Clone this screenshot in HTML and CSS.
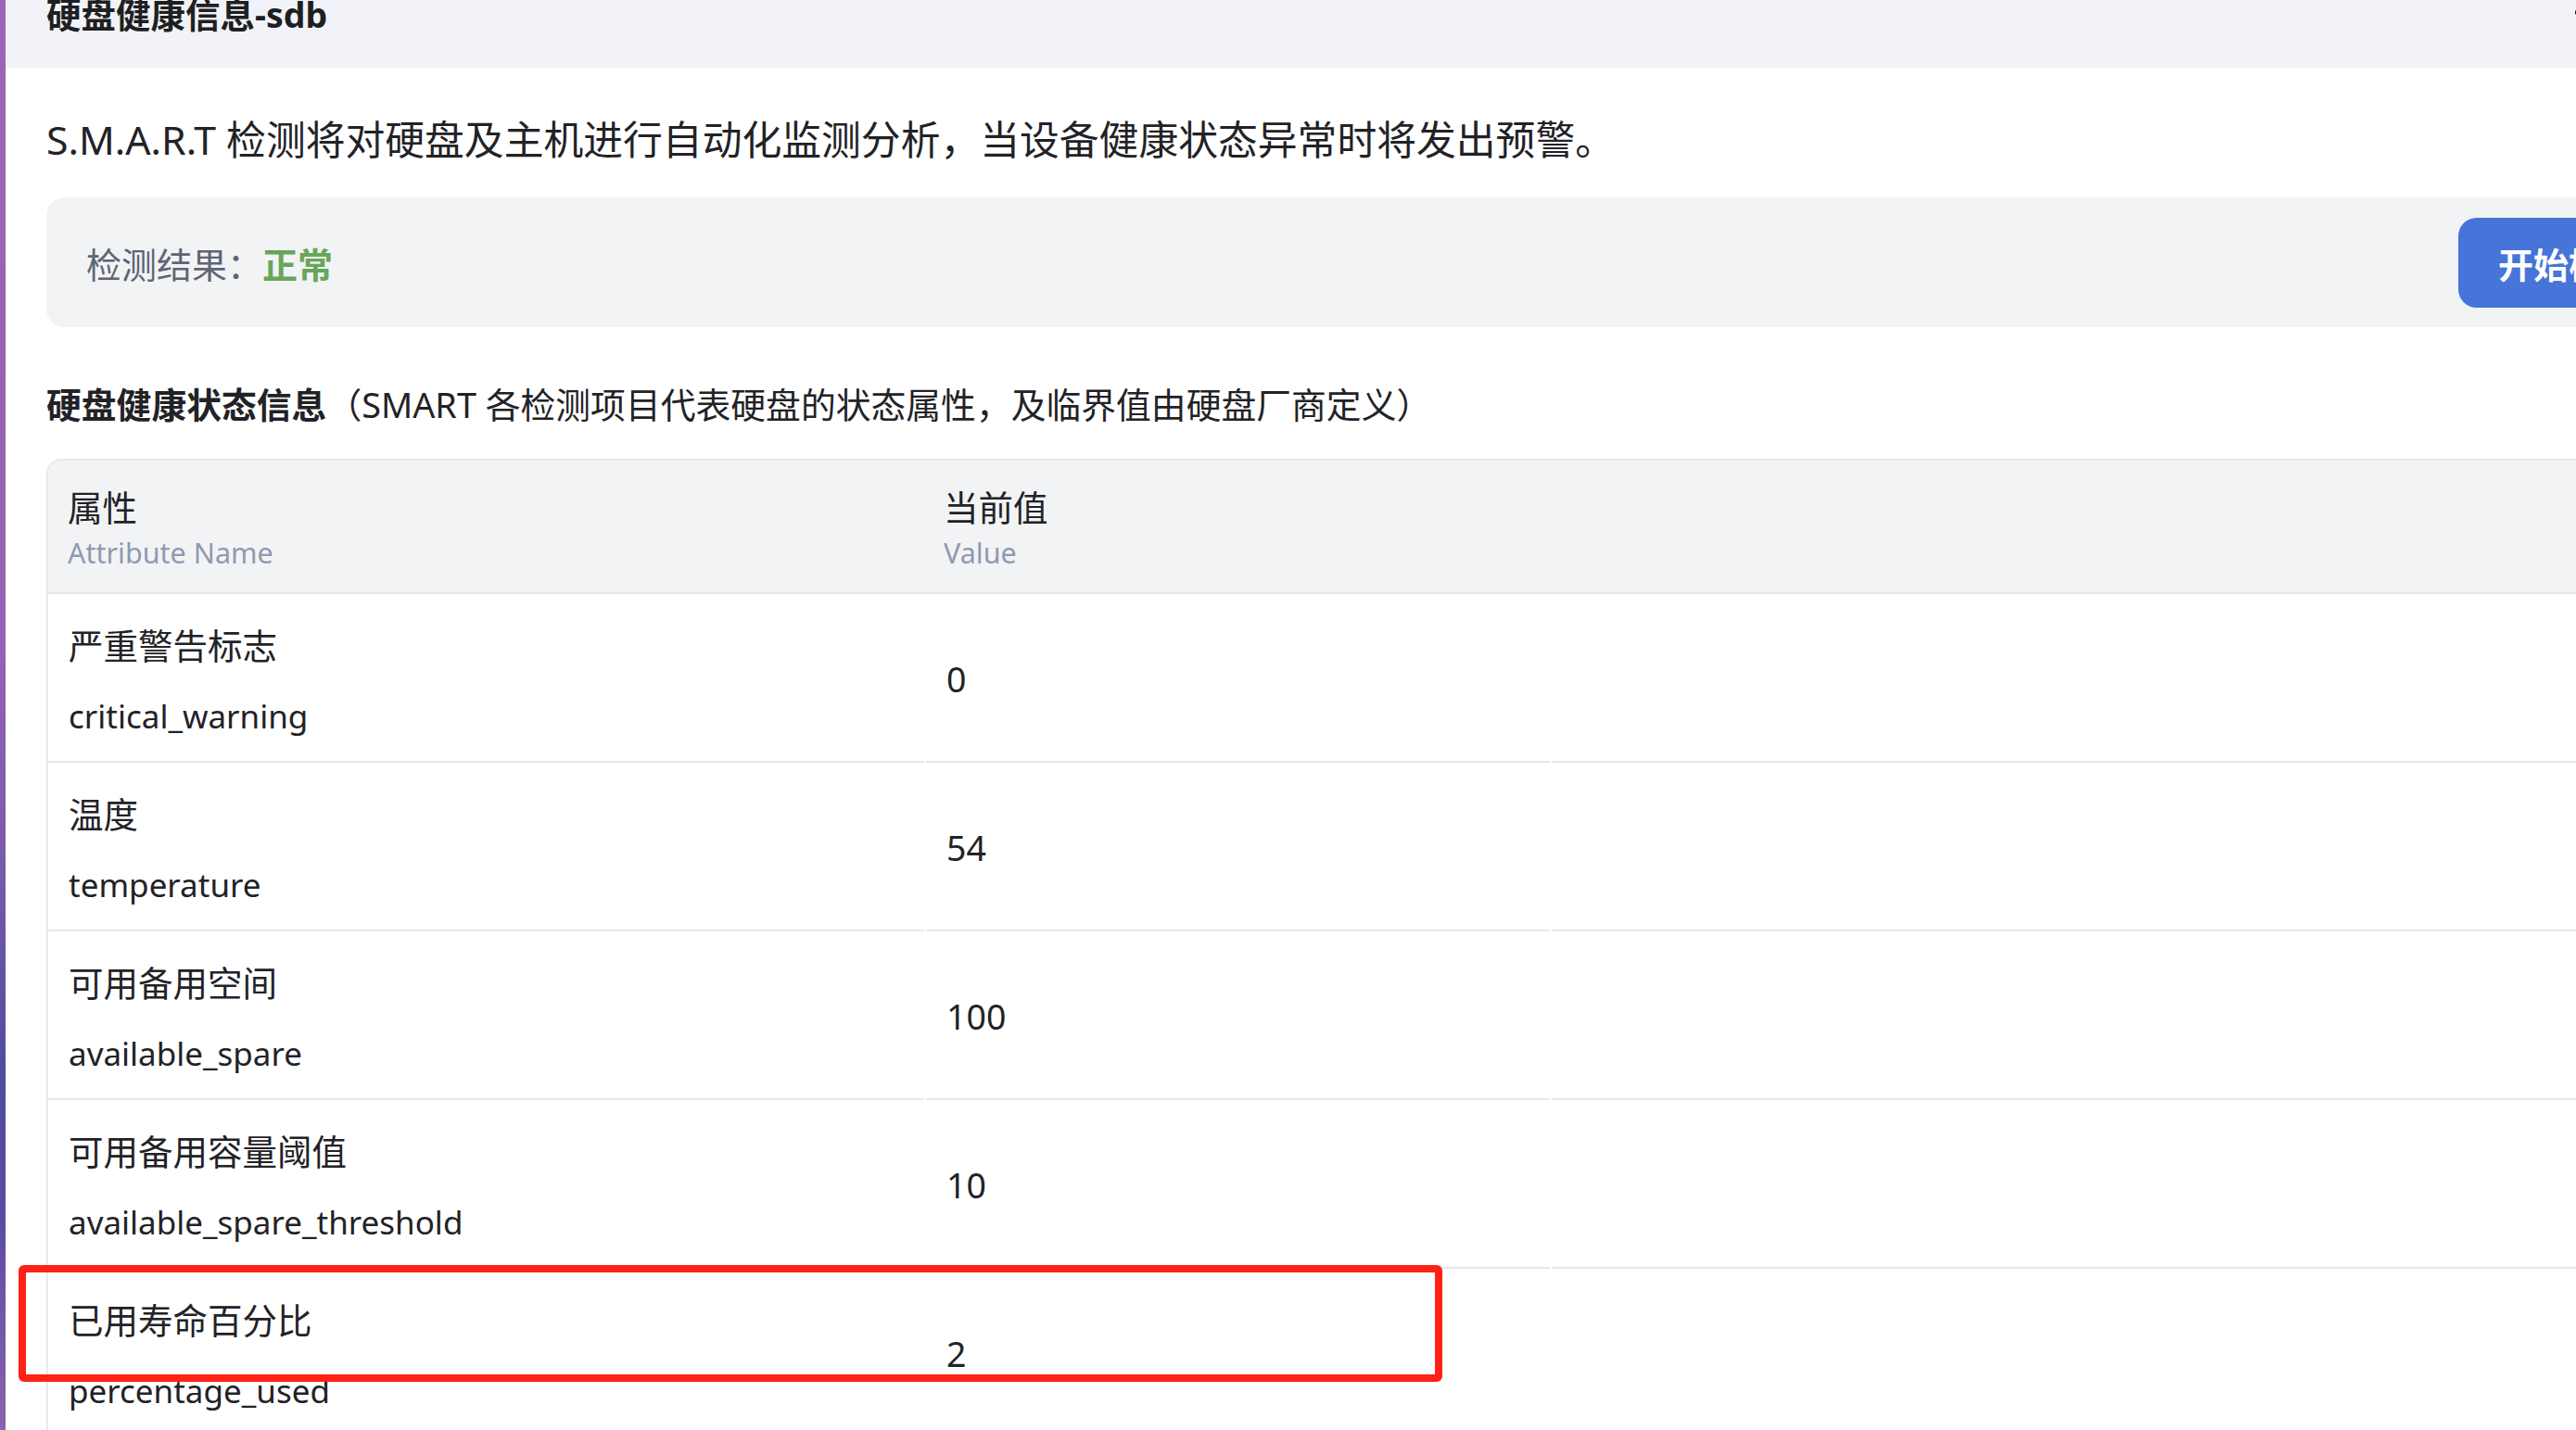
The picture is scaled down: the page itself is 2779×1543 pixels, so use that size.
FILE: index.html
```html
<!DOCTYPE html>
<html lang="zh-CN">
<head>
<meta charset="utf-8">
<title>硬盘健康信息-sdb</title>
<link rel="stylesheet" href="styles.css">
</head>
<body>
<div class="desk"></div>
<div class="dialog">
  <div class="dlg-head">
    <div class="title">硬盘健康信息-sdb</div>
    <svg class="close" width="30" height="30" viewBox="0 0 30 30"><line x1="1" y1="13.5" x2="22" y2="13.5" stroke="#222" stroke-width="4"/></svg>
  </div>
  <div class="dlg-body">
    <div class="desc">S.M.A.R.T 检测将对硬盘及主机进行自动化监测分析，当设备健康状态异常时将发出预警。</div>
    <div class="result">
      <div class="result-text">检测结果：<span class="ok">正常</span></div>
      <button class="btn">开始检测</button>
    </div>
    <div class="section">
      <span class="section-strong">硬盘健康状态信息</span><span class="section-note">（SMART 各检测项目代表硬盘的状态属性，及临界值由硬盘厂商定义）</span>
    </div>
    <div class="table">
      <div class="thead">
        <div class="th">
          <div class="th-cn">属性</div>
          <div class="th-en">Attribute Name</div>
        </div>
        <div class="th">
          <div class="th-cn">当前值</div>
          <div class="th-en">Value</div>
        </div>
        <div class="th"></div>
      </div>
      <div class="tr">
        <div class="td name"><div class="n-cn">严重警告标志</div><div class="n-en">critical_warning</div></div>
        <div class="td val">0</div>
        <div class="td"></div>
      </div>
      <div class="tr">
        <div class="td name"><div class="n-cn">温度</div><div class="n-en">temperature</div></div>
        <div class="td val">54</div>
        <div class="td"></div>
      </div>
      <div class="tr">
        <div class="td name"><div class="n-cn">可用备用空间</div><div class="n-en">available_spare</div></div>
        <div class="td val">100</div>
        <div class="td"></div>
      </div>
      <div class="tr">
        <div class="td name"><div class="n-cn">可用备用容量阈值</div><div class="n-en">available_spare_threshold</div></div>
        <div class="td val">10</div>
        <div class="td"></div>
      </div>
      <div class="tr">
        <div class="td name"><div class="n-cn">已用寿命百分比</div><div class="n-en">percentage_used</div></div>
        <div class="td val">2</div>
        <div class="td"></div>
      </div>
    </div>
  </div>
</div>
<div class="highlight"></div>
</body>
</html>
```
FILE: styles.css
```css
html, body {
  margin: 0;
  height: 100%;
  overflow: hidden;
  background: #fff;
}
body {
  display: flex;
  align-items: flex-start;
  font-family: "Noto Sans", "Noto Sans CJK SC", sans-serif;
  color: #222226;
}
.desk {
  flex: none;
  width: 6px;
  height: 100%;
  background: linear-gradient(180deg, #9d63b6 0%, #9661b4 45%, #7a5bab 60%, #4f4c9e 75%, #5b4aa3 85%, #8a64ad 100%);
}
.dialog {
  flex: none;
  width: 2960px;
  background: #fff;
}
.dlg-head {
  height: 73px;
  background: #f1f3f8;
  display: flex;
  align-items: flex-start;
  padding: 0 159px 0 44px;
}
.title {
  font-size: 37.5px;
  font-weight: 700;
  line-height: 32px;
  color: #1f1f22;
}
.close {
  margin-left: auto;
  flex: none;
}
.dlg-body {
  padding: 48px 44px 0;
}
.desc {
  font-size: 42.8px;
  line-height: 60px;
}
.result {
  margin-top: 32px;
  height: 140px;
  box-sizing: border-box;
  background: #f2f3f5;
  border-radius: 20px;
  display: flex;
  align-items: center;
  justify-content: space-between;
  padding: 0 32px 0 43px;
}
.result-text {
  font-size: 38px;
  color: #5e6573;
}
.ok {
  color: #67a65a;
  font-weight: 700;
}
.btn {
  width: 238px;
  height: 97px;
  border: 0;
  border-radius: 20px;
  background: #4674d8;
  color: #fff;
  font-family: inherit;
  font-size: 38px;
  font-weight: 700;
  text-align: left;
  padding: 0 0 0 43px;
  white-space: nowrap;
}
.section {
  margin-top: 56px;
  font-size: 37.8px;
  line-height: 56px;
}
.section-strong {
  font-weight: 700;
}
.table {
  margin-top: 30px;
  border-left: 2px solid #e6e9ef;
  border-top: 2px solid #e4e7ed;
  border-top-left-radius: 16px;
}
.thead {
  display: grid;
  grid-template-columns: 945px 673px 1fr;
  background: #f2f3f5;
  border-bottom: 2px solid #e4e7ed;
  border-top-left-radius: 14px;
  height: 144px;
  box-sizing: border-box;
}
.th {
  display: flex;
  flex-direction: column;
  justify-content: center;
  padding: 8px 0 0 21px;
}
.th-cn {
  font-size: 37.5px;
  line-height: 48px;
}
.th-en {
  font-size: 30.5px;
  line-height: 48px;
  color: #8e9ab0;
}
.tr {
  display: grid;
  grid-template-columns: 945px 673px 1fr;
  column-gap: 2px;
  height: 182px;
}
.td {
  border-bottom: 2px solid #e4e7ed;
  display: flex;
  flex-direction: column;
  justify-content: center;
  padding-left: 22px;
}
.name {
  font-size: 37.5px;
  line-height: 76px;
  padding-top: 7px;
}
.n-en {
  font-size: 35px;
}
.val {
  font-size: 37.5px;
  line-height: 56px;
  padding-top: 4px;
}
.highlight {
  position: absolute;
  left: 20px;
  top: 1365px;
  width: 1536px;
  height: 126px;
  box-sizing: border-box;
  border: 8px solid #ff2116;
  border-radius: 6px;
}
```
